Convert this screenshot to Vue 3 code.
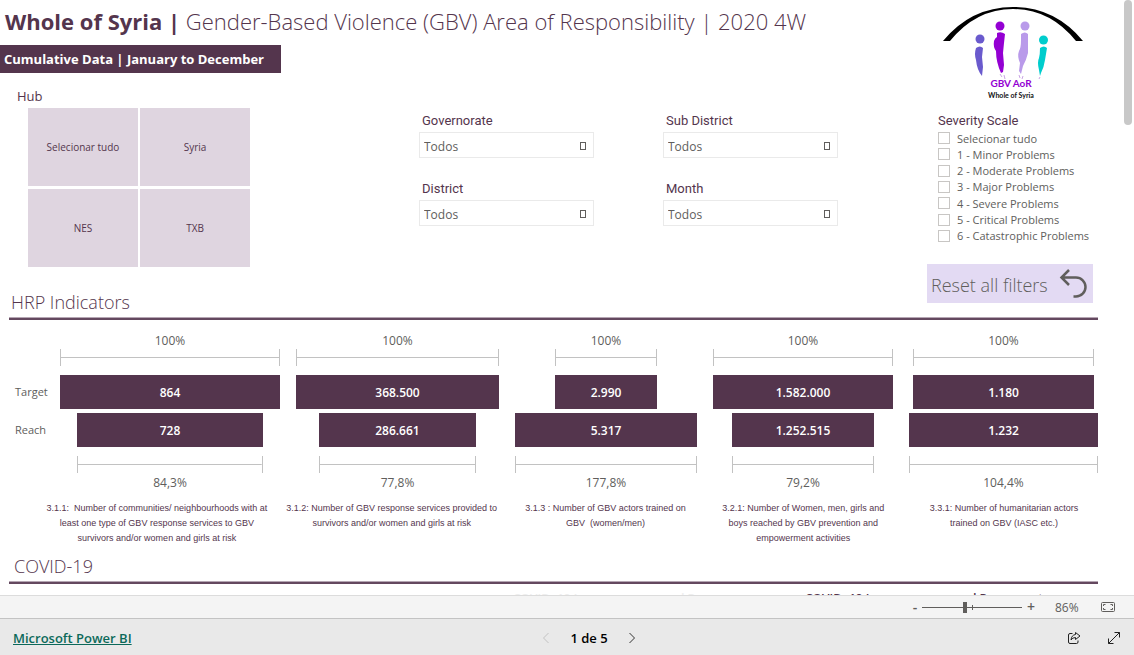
<script setup>
import { ref } from 'vue'

const hubs = ['Selecionar tudo', 'Syria', 'NES', 'TXB']
const filters = ['Governorate', 'Sub District', 'District', 'Month']
const severities = [
  'Selecionar tudo',
  '1 - Minor Problems',
  '2 - Moderate Problems',
  '3 - Major Problems',
  '4 - Severe Problems',
  '5 - Critical Problems',
  '6 - Catastrophic Problems',
]
const zoom = ref(43)

const indicators = [
  { target: '864', reach: '728', pct: '84,3%', tw: 100, rw: 84.3, lines: ['3.1.1:\u00a0 Number of communities/ neighbourhoods with at', 'least one type of GBV response services to GBV', 'survivors and/or women and girls at risk'] },
  { target: '368.500', reach: '286.661', pct: '77,8%', tw: 100, rw: 77.8, lines: ['3.1.2: Number of GBV response services provided to', 'survivors and/or women and girls at risk'] },
  { target: '2.990', reach: '5.317', pct: '177,8%', tw: 56.2, rw: 100, lines: ['3.1.3 : Number of GBV actors trained on', 'GBV\u00a0 (women/men)'] },
  { target: '1.582.000', reach: '1.252.515', pct: '79,2%', tw: 100, rw: 79.2, lines: ['3.2.1: Number of Women, men, girls and', 'boys reached by GBV prevention and', 'empowerment activities'] },
  { target: '1.180', reach: '1.232', pct: '104,4%', tw: 95.8, rw: 100, lines: ['3.3.1: Number of humanitarian actors', 'trained on GBV (IASC etc.)'] },
]
</script>

<template>
  <div class="viewer">
    <div class="viewport">
      <main class="report">
        <div class="top">
          <div class="lead">
            <h1 class="title"><b>Whole of Syria |</b> Gender-Based Violence (GBV) Area of Responsibility | 2020 4W</h1>
            <p class="banner">Cumulative Data | January to December</p>
            <div class="slicers">
              <section class="hub">
                <h3 class="hub-title">Hub</h3>
                <div class="tiles">
                  <button v-for="h in hubs" :key="h" type="button" class="tile">{{ h }}</button>
                </div>
              </section>
              <div class="filters">
                <div v-for="(f, i) in filters" :key="f" class="filter">
                  <label class="filter-label" :for="'filter-' + i">{{ f }}</label>
                  <div class="select-wrap">
                    <select :id="'filter-' + i" class="select"><option>Todos</option></select>
                    <span class="select-mark"></span>
                  </div>
                </div>
              </div>
            </div>
          </div>

          <aside class="side">
            <svg class="logo" viewBox="0 0 142 98" role="img" aria-label="GBV AoR Whole of Syria">
              <path d="M1 36 Q29 2 71 2 Q113 2 141 36 L134 36 Q108 4 71 4 Q34 4 8 36 Z" fill="#000" />
              <circle cx="38" cy="34" r="4.5" fill="#6a5acd" />
              <path d="M34 43 Q38 40 41 43 L40 52 L41 62 L40 71 Q35 65 34 55 Q32 49 34 43Z" fill="#6a5acd" />
              <circle cx="58" cy="21" r="4.5" fill="#9400d3" />
              <path d="M55 28 Q59 26 63 29 L62 38 L61 48 L62 60 L61 67 L59 68 Q54 57 54 46 Q51 42 52 36 Q53 33 55 32Z" fill="#9400d3" />
              <circle cx="83" cy="21" r="4.5" fill="#b99aea" />
              <path d="M79 29 Q83 26 86 29 L86 48 Q84 56 81 61 L79 69 L77 66 L78 58 Q75 51 77 46 Q79 43 79 35Z" fill="#b99aea" />
              <circle cx="101.500" cy="35" r="4.500" fill="#00cdcd" />
              <path d="M98 43 Q102 40 105 43 L103 55 Q102 62 99 68 L98 71 L97 65 Q95 57 97 53 Q98 49 98 43Z" fill="#00cdcd" />
              <path d="M58 69l2 3M62 70l1 4M77 70l1 3M81 71l-1 3M98 72l-1 2" stroke="#c9a4e4" stroke-width="1" />
              <text x="69" y="82" class="logo-name">GBV AoR</text>
              <text x="69" y="93" class="logo-sub">Whole of Syria</text>
            </svg>
            <fieldset class="severity">
              <legend class="severity-title">Severity Scale</legend>
              <div class="severity-list">
                <label v-for="s in severities" :key="s" class="check"><input type="checkbox" class="box" />{{ s }}</label>
              </div>
            </fieldset>
            <button type="button" class="reset">
              <span>Reset all filters</span>
              <svg class="undo" viewBox="0 0 28 30" aria-hidden="true">
                <path d="M10 1 L2.500 8.500 L10 16 M2.500 8.500 H17 A9.500 9.500 0 0 1 17 27.500 H14.500" fill="none" stroke="#605e5c" stroke-width="2.500" />
              </svg>
            </button>
          </aside>
        </div>

        <h2 class="section-title">HRP Indicators</h2>
        <div class="funnels">
          <div class="axis"><span class="axis-label">Target</span><span class="axis-label">Reach</span></div>
          <div v-for="i in indicators" :key="i.target" class="funnel">
            <span class="pct">100%</span>
            <span class="bracket" :style="{ width: i.tw + '%' }"></span>
            <span class="bar bar-target" :style="{ width: i.tw + '%' }">{{ i.target }}</span>
            <span class="bar" :style="{ width: i.rw + '%' }">{{ i.reach }}</span>
            <span class="bracket bracket-reach" :style="{ width: i.rw + '%' }"></span>
            <span class="pct">{{ i.pct }}</span>
          </div>
        </div>
        <div class="captions">
          <p v-for="i in indicators" :key="i.pct" class="caption">
            <span v-for="l in i.lines" :key="l" class="caption-line">{{ l }}</span>
          </p>
        </div>

        <h2 class="section-title covid">COVID-19</h2>
        <div class="next-row">
          <h3 class="next-title faint">COVID -19 Issues concern and Response</h3>
          <h3 class="next-title">COVID -19 Issues concern and Response to</h3>
        </div>
      </main>
      <div class="scrollbar"><div class="scroll-thumb"></div></div>
    </div>

    <div class="zoombar">
      <button type="button" class="zoom-btn" aria-label="Zoom out">-</button>
      <input v-model="zoom" type="range" min="0" max="100" class="slider" aria-label="Zoom" />
      <button type="button" class="zoom-btn zoom-in" aria-label="Zoom in">+</button>
      <span class="zoom-value">86%</span>
      <button type="button" class="icon-btn" aria-label="Fit to page">
        <svg width="14" height="10" viewBox="0 0 14 10" fill="none" stroke="#605e5c">
          <rect x=".5" y=".5" width="13" height="9" rx="1" />
          <path d="M4.500 2.500h-2v1.500M2.500 6v1.500h2M9.500 2.500h2v1.500M11.500 6v1.500h-2" />
        </svg>
      </button>
    </div>

    <footer class="footer">
      <a href="#" class="brand">Microsoft Power BI</a>
      <nav class="pager">
        <button type="button" class="icon-btn" disabled aria-label="Previous page">
          <svg width="8" height="12" viewBox="0 0 8 12" fill="none" stroke="#c3c3c3"><path d="M6.500 1 L1.500 6 L6.500 11" /></svg>
        </button>
        <span class="page">1 de 5</span>
        <button type="button" class="icon-btn" aria-label="Next page">
          <svg width="8" height="12" viewBox="0 0 8 12" fill="none" stroke="#333"><path d="M1.500 1 L6.500 6 L1.500 11" /></svg>
        </button>
      </nav>
      <div class="actions">
        <button type="button" class="icon-btn" aria-label="Share">
          <svg width="14" height="14" viewBox="0 0 14 14" fill="none" stroke="#222">
            <path d="M5.500 2.500H3A1.500 1.500 0 0 0 1.500 4V11A1.500 1.500 0 0 0 3 12.500H9.500A1.500 1.500 0 0 0 11 11V9.500" />
            <path d="M8.500 1.500 L13 5 L8.500 8.500 V6.500 Q5.500 6.500 4 9 Q4.500 4 8.500 3.500 Z" stroke-linejoin="round" />
          </svg>
        </button>
        <button type="button" class="icon-btn" aria-label="Full screen">
          <svg width="14" height="14" viewBox="0 0 14 14" fill="none" stroke="#222">
            <path d="M1.500 12.500 L12.500 1.500 M7.500 1.500 H12.500 V6.500 M1.500 7.500 V12.500 H6.500" />
          </svg>
        </button>
      </div>
    </footer>
  </div>
</template>

<style>
body {
  margin: 0;
  background: #fff;
}
</style>

<style scoped>
.viewer {
  display: flex;
  flex-direction: column;
  height: 100vh;
  font-family: "Open Sans", "Noto Sans", sans-serif;
  color: #54354d;
}
.viewer *,
.viewer *::before {
  box-sizing: border-box;
}
button {
  font: inherit;
  color: inherit;
  border: 0;
  padding: 0;
  background: none;
}
h1, h2, h3, p, fieldset, legend {
  margin: 0;
  padding: 0;
  border: 0;
  font-weight: 400;
}
.viewport {
  display: flex;
  flex: 1;
  min-height: 0;
  overflow: hidden;
}
.report {
  flex: 1;
  min-width: 0;
  padding-right: 24px;
}
.scrollbar {
  width: 12px;
  padding-right: 2px;
}
.scroll-thumb {
  width: 8px;
  height: 125px;
  margin-left: 2px;
  border-radius: 4px;
  background: #c8c8c8;
}
.top {
  display: flex;
  justify-content: space-between;
  height: 291px;
}
.lead {
  flex: 1;
}
.title {
  padding: 5px 0 0 5px;
  height: 45px;
  font-size: 22px;
  line-height: 32px;
  font-weight: 350;
  white-space: nowrap;
}
.title b {
  font-weight: 700;
}
.banner {
  width: 281px;
  height: 28px;
  padding-left: 4px;
  background: #54354d;
  color: #fff;
  font-size: 13px;
  line-height: 28px;
  font-weight: 700;
  white-space: nowrap;
}
.slicers {
  display: flex;
  gap: 169px;
  padding-top: 14px;
}
.hub {
  width: 250px;
}
.hub-title {
  padding-left: 17px;
  height: 21px;
  font-size: 13px;
  line-height: 18px;
  font-weight: 500;
}
.tiles {
  display: grid;
  grid-template-columns: 1fr 1fr;
  grid-auto-rows: 78px;
  gap: 3px 2px;
  margin-left: 28px;
}
.tile {
  background: #dfd5e0;
  font-size: 10px;
  font-weight: 500;
}
.filters {
  display: grid;
  grid-template-columns: 175px 175px;
  gap: 20px 69px;
  align-content: start;
  padding-top: 24px;
}
.filter-label {
  display: block;
  height: 21px;
  padding-left: 3px;
  font-family: Roboto, sans-serif;
  font-size: 13px;
  line-height: 20px;
}
.select-wrap {
  position: relative;
  height: 27px;
}
.select {
  appearance: none;
  width: 100%;
  height: 26px;
  padding: 2px 4px 0;
  border: 1px solid #eaeaea;
  border-radius: 0;
  background: #fff;
  color: #605e5c;
  font-family: inherit;
  font-size: 12px;
}
.select-mark {
  position: absolute;
  right: 8px;
  top: 10px;
  width: 6px;
  height: 8px;
  border: 1px solid #605e5c;
  pointer-events: none;
}
.side {
  width: 171px;
}
.logo {
  display: block;
  width: 142px;
  height: 98px;
  margin: 5px 0 0 15px;
}
.logo-name {
  font: 700 10px Lato, sans-serif;
  fill: #9400d3;
  text-anchor: middle;
}
.logo-sub {
  font: 700 7px Lato, sans-serif;
  fill: #111;
  text-anchor: middle;
}
.severity {
  margin: 9px 0 0 11px;
}
.severity-title {
  font-family: Roboto, sans-serif;
  font-size: 13px;
  line-height: 18px;
}
.severity-list {
  display: flex;
  flex-direction: column;
  justify-content: space-between;
  height: 114px;
}
.check {
  display: flex;
  align-items: center;
  gap: 7px;
  height: 16px;
  color: #605e5c;
  font-size: 11px;
  white-space: nowrap;
}
.box {
  appearance: none;
  flex: none;
  width: 12px;
  height: 12px;
  margin: 0;
  border: 1px solid #c8c6c4;
  background: #fff;
}
.reset {
  display: flex;
  align-items: center;
  justify-content: space-between;
  width: 166px;
  height: 39px;
  margin-top: 20px;
  padding: 0 6px 0 4px;
  background: #e3daf3;
  color: #605e5c;
  font-size: 18px;
  line-height: 24px;
  font-weight: 300;
}
.reset span {
  padding-top: 2px;
}
.undo {
  width: 28px;
  height: 30px;
}
.section-title {
  height: 29px;
  margin-left: 9px;
  padding-left: 2px;
  border-bottom: 2px solid #64485f;
  box-shadow: inset 0 -1px #b5a6b3;
  font-size: 18px;
  line-height: 23px;
  font-weight: 300;
}
.funnels {
  display: grid;
  grid-template-columns: 44px 220fr 203fr 182fr 180fr 189fr;
  column-gap: 16px;
  padding-top: 11px;
}
.axis {
  display: flex;
  flex-direction: column;
  gap: 4px;
  padding: 44px 0 0 15px;
}
.axis-label {
  height: 34px;
  color: #605e5c;
  font-size: 11px;
  line-height: 34px;
}
.funnel {
  display: flex;
  flex-direction: column;
  align-items: center;
}
.pct {
  height: 18px;
  color: #605e5c;
  font-size: 12px;
  line-height: 20px;
}
.bracket {
  height: 17px;
  border: solid #c2c2c2;
  border-width: 0 1px;
  background: linear-gradient(#c2c2c2, #c2c2c2) center / 100% 1px no-repeat;
}
.bracket-reach {
  margin-top: 9px;
}
.bar {
  height: 34px;
  background: #54354d;
  color: #fff;
  font-size: 12px;
  line-height: 36px;
  font-weight: 600;
  text-align: center;
}
.bar-target {
  margin: 9px 0 4px;
}
.captions {
  display: grid;
  grid-template-columns: 224fr 214fr 182fr 182fr 188fr;
  column-gap: 16px;
  padding: 10px 0 0 45px;
  height: 64px;
}
.caption {
  display: flex;
  flex-direction: column;
  align-items: center;
  font-family: "Liberation Sans", Arial, sans-serif;
  font-size: 9px;
  line-height: 15px;
  white-space: nowrap;
}
.covid {
  padding-left: 5px;
}
.next-row {
  display: grid;
  grid-template-columns: 292fr 293fr;
  margin-left: 513px;
  padding-top: 6px;
}
.next-title {
  font-size: 12px;
  line-height: 18px;
  font-weight: 600;
  white-space: nowrap;
}
.faint {
  color: #eee;
}
.zoombar {
  display: flex;
  align-items: center;
  justify-content: flex-end;
  height: 23px;
  padding-right: 19px;
  border-top: 1px solid #dcdcdc;
  background: #f4f4f4;
  color: #605e5c;
  font-size: 12px;
}
.zoom-btn {
  width: 10px;
  font-size: 14px;
  line-height: 20px;
  font-weight: 600;
}
.zoom-in {
  margin-left: 4px;
}
.slider {
  appearance: none;
  width: 100px;
  height: 12px;
  margin: 0 0 0 2px;
  background:
    linear-gradient(#605e5c, #605e5c) 50% 6px / 100% 1px no-repeat,
    linear-gradient(#605e5c, #605e5c) 50px 4px / 1px 5px no-repeat;
}
.slider::-webkit-slider-thumb {
  appearance: none;
  width: 4px;
  height: 11px;
  background: #605e5c;
}
.zoom-value {
  width: 27px;
  margin: 0 19px;
}
.icon-btn {
  display: flex;
}
.footer {
  display: grid;
  grid-template-columns: 529fr 94px 485fr;
  align-items: center;
  height: 37px;
  padding: 2px 13px 0;
  border-top: 1px solid #c3c3c3;
  background: #e9e9e9;
}
.brand {
  color: #0c695a;
  font-size: 13px;
  font-weight: 600;
}
.pager {
  display: flex;
  align-items: center;
  justify-content: space-between;
}
.page {
  color: #000;
  font-size: 13px;
  font-weight: 600;
}
.actions {
  display: flex;
  justify-content: flex-end;
  gap: 26px;
}
</style>
